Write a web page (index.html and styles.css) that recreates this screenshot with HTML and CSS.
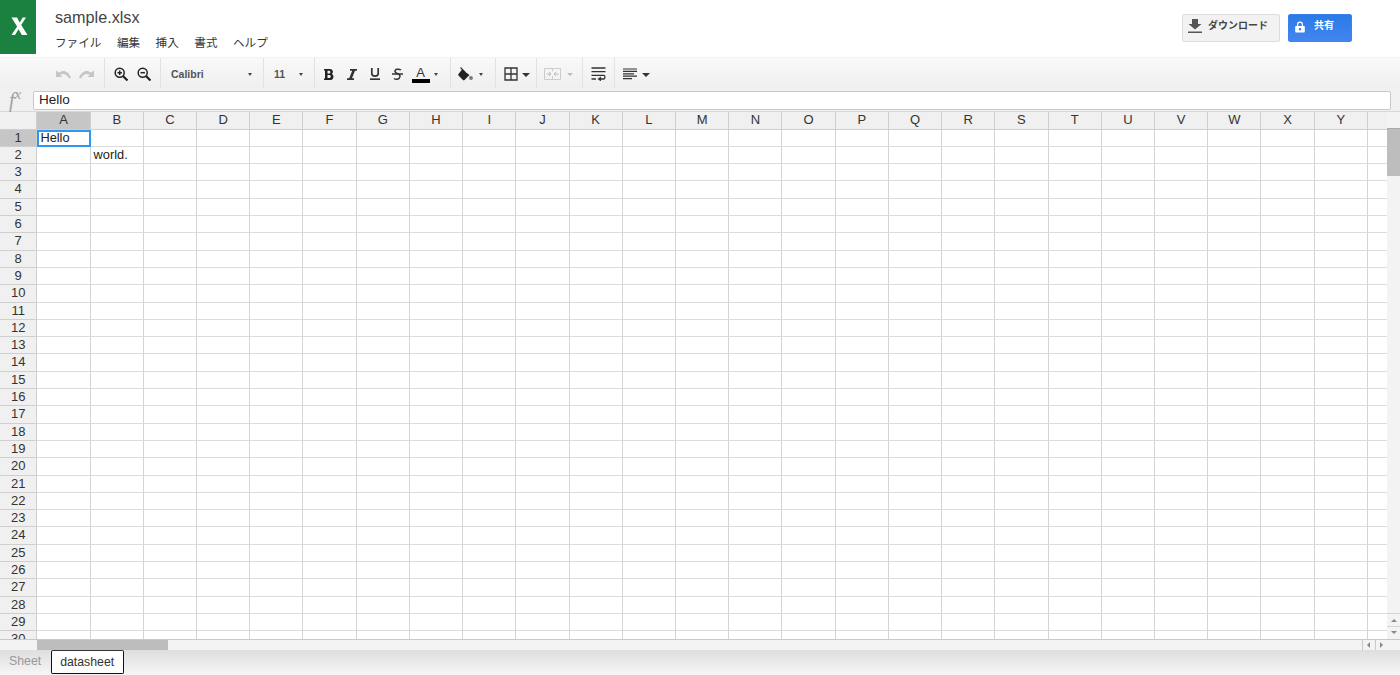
FILE: index.html
```html
<!DOCTYPE html>
<html lang="ja">
<head>
  <meta charset="UTF-8" />
  <title>sample.xlsx</title>
  <link rel="stylesheet" href="styles.css">
</head>
<body>

  <!-- HEADER -->
  <header class="app-header">
    <div class="logo">
      <svg width="36" height="54" viewBox="0 0 36 54" aria-hidden="true">
        <path fill="#fff" d="M11.500 17.500h5.500l2.700 5 3-5h3.300l-4.800 7.400 6.300 10.100h-5.600l-3.400-5.800-3.500 5.800h-3.500l5.600-8.600z"/>
      </svg>
    </div>
    <div class="doc-info">
      <div class="doc-title">sample.xlsx</div>
      <nav class="menu">
        <span>ファイル</span>
        <span>編集</span>
        <span>挿入</span>
        <span>書式</span>
        <span>ヘルプ</span>
      </nav>
    </div>
    <div class="actions">
      <button class="btn-download">
        <svg width="16" height="16" viewBox="0 0 16 16" aria-hidden="true">
          <path fill="#555" d="M5 1h6v5h3.500L8 11.500 1.500 6H5zM1 13.500h14V15H1z"/>
        </svg>
        <span>ダウンロード</span>
      </button>
      <button class="btn-share">
        <svg width="10" height="12" viewBox="0 0 10 12" aria-hidden="true">
          <path fill="#fff" d="M1 5h1V3.500a3 3 0 0 1 6 0V5h1a.8.8 0 0 1 .8.800v5a.8.8 0 0 1-.8.800H1a.8.8 0 0 1-.8-.8v-5A.8.8 0 0 1 1 5zm2.200 0h3.600V3.500a1.800 1.800 0 0 0-3.600 0zM5 7a1.200 1.200 0 1 0 0 2.400A1.200 1.200 0 0 0 5 7z"/>
        </svg>
        <span>共有</span>
      </button>
    </div>
  </header>

  <!-- TOOLBAR -->
  <div class="toolbar">
    <div class="group group-history">
      <span class="tool">
        <svg width="15" height="10" viewBox="0 0 15 10"><path fill="#c6c6c6" d="M0 1.500V8h6.500L4.300 5.800C7 4.200 10.500 4.500 13 9.500L15 8.500C12 1.500 7 .5 3 3.500z"/></svg>
      </span>
      <span class="tool">
        <svg width="15" height="10" viewBox="0 0 15 10"><path fill="#c6c6c6" d="M15 1.500V8H8.500l2.200-2.200C8 4.200 4.500 4.500 2 9.500L0 8.500C3 1.500 8 .5 12 3.500z"/></svg>
      </span>
    </div>
    <div class="group group-zoom">
      <span class="tool">
        <svg width="14" height="14" viewBox="0 0 14 14"><g fill="none" stroke="#222" stroke-width="1.500"><circle cx="5.700" cy="5.700" r="4.500"/><path d="M9 9l4.500 4.500" stroke-width="2.200"/><path d="M3.500 5.700h4.400M5.700 3.500v4.400"/></g></svg>
      </span>
      <span class="tool">
        <svg width="14" height="14" viewBox="0 0 14 14"><g fill="none" stroke="#222" stroke-width="1.500"><circle cx="5.700" cy="5.700" r="4.500"/><path d="M9 9l4.500 4.500" stroke-width="2.200"/><path d="M3.500 5.700h4.400"/></g></svg>
      </span>
    </div>
    <div class="group group-font">
      <span class="font-name">Calibri</span>
      <i class="caret"></i>
    </div>
    <div class="group group-size">
      <span class="font-size">11</span>
      <i class="caret"></i>
    </div>
    <div class="group group-format">
      <span class="tool">
        <svg width="10" height="11" viewBox="0 0 10 11"><path fill="#222" fill-rule="evenodd" d="M0 0h6c3 0 3.800 3.700 1.800 4.900C10.300 5.700 10 11 6.500 11H0V9.500h1v-8H0zm3.500 1.800v2.700h1.700c1.500 0 1.500-2.700 0-2.700zm0 4.300v3h2c1.700 0 1.700-3 0-3z"/></svg>
      </span>
      <span class="tool">
        <svg width="10" height="11" viewBox="0 0 10 11"><path fill="#333" d="M3 0h7v1.700H8L5 9.300h2V11H0V9.300h2.200l3-7.600H3z"/></svg>
      </span>
      <span class="tool">
        <svg width="10" height="12" viewBox="0 0 10 12"><g fill="none" stroke="#333" stroke-width="1.700"><path d="M1.800 0v5.500c0 3.500 6.400 3.500 6.400 0V0"/><path d="M0 11.200h10"/></g></svg>
      </span>
      <span class="tool">
        <svg width="11" height="13" viewBox="0 0 11 13"><g fill="none" stroke="#333" stroke-width="1.500"><path d="M9 2C7 .5 2.500 1 3 3.500S8.500 5.500 8 8.500 4 12 2 10.500"/><path d="M0 6h11"/></g></svg>
      </span>
      <span class="tool tool-color">
        <span class="color-a">A</span>
        <span class="color-bar"></span>
      </span>
      <i class="caret caret-tight"></i>
    </div>
    <div class="group group-fill">
      <span class="tool">
        <svg width="15" height="14" viewBox="0 0 15 14"><path fill="none" stroke="#333" stroke-width="1.200" d="M2.500.500l4.800 4.800"/><path fill="#222" d="M4 2.500l7.500 5.500-5 5c-.5.500-1 .5-1.500 0L.5 8.500c-.5-.5-.5-1 0-1.500z"/><circle cx="13" cy="11" r="1.900" fill="#777"/></svg>
      </span>
      <i class="caret"></i>
    </div>
    <div class="group group-borders">
      <span class="tool">
        <svg width="14" height="14" viewBox="0 0 14 14"><path fill="none" stroke="#333" stroke-width="1.300" d="M1 1h12v12H1zM7 1v12M1 7h12"/></svg>
      </span>
      <i class="caret caret-big"></i>
    </div>
    <div class="group group-merge">
      <span class="tool">
        <svg width="17" height="12" viewBox="0 0 17 12"><g fill="none" stroke="#ccc"><path d="M.5.500h16v11H.5zM8.500.500v3M8.500 8v3.500"/><path d="M2.500 6h4M5 4l2 2-2 2M14.500 6h-4M12 4l-2 2 2 2" stroke="#bbb"/></g></svg>
      </span>
      <i class="caret caret-off"></i>
    </div>
    <div class="group group-wrap">
      <span class="tool">
        <svg width="15" height="14" viewBox="0 0 15 14"><g fill="none" stroke="#333" stroke-width="1.300"><path d="M.5 1h14M.5 4.700h14M.5 8.400h12.300c1.500 0 1.500 3.600 0 3.600H9M.5 12H5"/></g><path fill="#333" d="M10 9.500v5l-3.500-2.500z"/></svg>
      </span>
    </div>
    <div class="group group-align">
      <span class="tool">
        <svg width="15" height="12" viewBox="0 0 15 12"><path fill="none" stroke="#333" stroke-width="1.200" d="M0 1h14M0 3.400h14M0 5.800h11M0 8.200h14M0 10.600h9"/></svg>
      </span>
      <i class="caret caret-big"></i>
    </div>
  </div>

  <!-- FORMULA BAR -->
  <div class="formula-bar">
    <span class="fx"><em>f</em><sup>x</sup></span>
    <div class="formula-input">Hello</div>
  </div>

  <!-- SHEET -->
  <div class="sheet-area">
    <div class="grid" id="grid"></div>
    <div class="vscroll">
      <div class="vscroll-track"><div class="vscroll-thumb"></div></div>
      <button class="arrow arrow-up"></button>
      <button class="arrow arrow-down"></button>
    </div>
  </div>

  <div class="hscroll">
    <div class="hscroll-track"><div class="hscroll-thumb"></div></div>
    <button class="arrow arrow-left"></button>
    <button class="arrow arrow-right"></button>
  </div>

  <!-- SHEET TABS -->
  <div class="tabs">
    <span class="tab">Sheet</span>
    <span class="tab tab-active">datasheet</span>
  </div>

  <script src="script.js"></script>
</body>
</html>
```

FILE: styles.css
```css
* {
  box-sizing: border-box;
}
html, body {
  height: 100%;
  margin: 0;
  overflow: hidden;
}
body {
  display: flex;
  flex-direction: column;
  font-family: "Liberation Sans", "Noto Sans CJK JP", sans-serif;
  color: #333;
  background: #fff;
}

/* header */
.app-header {
  display: flex;
  height: 57px;
  flex: none;
  background: #fff;
}
.logo {
  width: 36px;
  height: 54px;
  background: #1a8140;
}
.doc-info {
  padding: 7px 0 0 19px;
}
.doc-title {
  font-size: 16.200px;
  line-height: 20px;
  color: #444;
}
.menu {
  display: flex;
  gap: 15.500px;
  margin-top: 7px;
  font-size: 11.600px;
  line-height: 18px;
  color: #333;
}
.actions {
  display: flex;
  gap: 8px;
  margin-left: auto;
  margin-right: 48px;
  padding-top: 14px;
}
.actions button {
  display: flex;
  align-items: flex-start;
  height: 28px;
  padding: 0;
  border-radius: 2px;
  font: bold 10px "Liberation Sans", "Noto Sans CJK JP", sans-serif;
  line-height: 22px;
}
.btn-download {
  width: 98px;
  background: #f2f2f2;
  border: 1px solid #ddd;
  color: #444;
}
.btn-download svg {
  margin: 3px 0 0 4px;
}
.btn-download span {
  margin-left: 5px;
}
.btn-share {
  width: 64px;
  background: linear-gradient(#2a7ae8, #4485ef);
  border: 1px solid #3b82ee;
  color: #fff;
}
.btn-share svg {
  margin: 6px 0 0 6px;
}
.btn-share span {
  margin-left: 9px;
}

/* toolbar */
.toolbar {
  display: flex;
  height: 31px;
  flex: none;
  padding-left: 52px;
  background: linear-gradient(#f9f9f9, #efefef);
  border-top: 1px solid #f2f2f2;
}
.group {
  display: flex;
  align-items: center;
  height: 30px;
  padding-top: 2px;
  border-right: 1px solid #e2e2e2;
  padding-left: 3px;
}
.group-history { width: 53px; padding-left: 0; }
.group-zoom { width: 56px; padding-left: 4px; }
.group-font { width: 103px; padding-left: 10px; }
.group-size { width: 51px; padding-left: 10px; }
.group-format { width: 136px; padding-left: 2px; }
.group-fill { width: 45px; }
.group-borders { width: 41px; }
.group-merge { width: 46px; padding-left: 4px; }
.group-wrap { width: 32px; padding-left: 4px; }
.group-align { padding-left: 4px; border-right: none; }

.tool {
  display: flex;
  justify-content: center;
  align-items: center;
  flex: none;
  width: 23px;
  height: 20px;
}
.tool-color {
  flex-direction: column;
}
.color-a {
  font-size: 13px;
  line-height: 13px;
  color: #333;
}
.color-bar {
  width: 18px;
  height: 4px;
  background: #000;
}
.font-name {
  width: 75px;
  font-size: 10.500px;
  font-weight: bold;
  color: #555;
}
.font-size {
  width: 23px;
  font-size: 10.500px;
  font-weight: bold;
  color: #555;
}
.caret {
  flex: none;
  width: 8px;
  height: 3px;
  position: relative;
}
.caret::after {
  content: "";
  position: absolute;
  left: 2px;
  top: 0;
  border: 2px solid transparent;
  border-top: 3px solid #444;
  border-bottom: 0;
}
.caret-big::after {
  left: 0;
  border-width: 4px 4px 0;
  border-top-color: #333;
}
.caret-off::after {
  left: 1px;
  border-width: 3px 3px 0;
  border-top-color: #bbb;
}
.caret-off {
  margin-left: 2px;
}

/* formula bar */
.formula-bar {
  display: flex;
  align-items: center;
  height: 24px;
  flex: none;
  padding: 2px 9px 1px 0;
  background: #f0f0f0;
  border-bottom: 1px solid #d8d8d8;
}
.fx {
  width: 33px;
  padding-left: 9px;
  font-family: "Liberation Serif", serif;
  font-size: 20px;
  line-height: 18px;
  color: #a0a0a0;
}
.fx sup {
  font-size: 15px;
  line-height: 0;
  font-style: italic;
}
.formula-input {
  flex: 1;
  height: 19px;
  padding-left: 5px;
  background: #fff;
  border: 1px solid #c8c8c8;
  border-radius: 2px;
  font-size: 13.500px;
  line-height: 15px;
  color: #222;
}

/* grid */
.sheet-area {
  display: flex;
  flex: 1;
  min-height: 0;
}
.grid {
  flex: 1;
  display: grid;
  grid-template-columns: 37.400px repeat(25, 53.22px) 20px;
  grid-template-rows: 17.600px repeat(30, 17.31px);
  overflow: hidden;
  background: #fff;
}
.cell {
  border-right: 1px solid #d4d4d4;
  border-bottom: 1px solid #dcdcdc;
  padding-left: 3px;
  font-size: 12.800px;
  line-height: 15px;
  white-space: nowrap;
  color: #222;
}
.head {
  background: #f0f0f0;
  border-color: #cfcfcf;
  padding: 0;
  text-align: center;
  font-size: 13px;
  line-height: 15px;
  color: #333;
}
.selected-head {
  background: #c6c6c6;
}
.active {
  outline: 2px solid #2f97ee;
  outline-offset: -2px;
  border: none;
}

/* scrollbars */
.vscroll {
  display: flex;
  flex-direction: column;
  flex: none;
  width: 13px;
  background: #f3f3f3;
}
.vscroll-track {
  flex: 1;
  padding-top: 16px;
}
.vscroll-thumb {
  height: 48px;
  background: #bdbdbd;
  border-top: 1px solid #aaa;
}
.hscroll {
  display: flex;
  height: 11px;
  flex: none;
  padding-left: 37px;
  padding-right: 13px;
  background: #f3f3f3;
  border-top: 1px solid #c8c8c8;
}
.hscroll-track {
  flex: 1;
}
.hscroll-thumb {
  width: 131px;
  height: 100%;
  background: #bdbdbd;
}
.arrow {
  position: relative;
  flex: none;
  width: 13px;
  height: 13px;
  padding: 0;
  background: #f3f3f3;
  border: none;
  border-top: 1px solid #d4d4d4;
}
.arrow::after {
  content: "";
  position: absolute;
  left: 4px;
  top: 4px;
  border: 3px solid transparent;
}
.arrow-up::after {
  top: 2px;
  border-bottom-color: #888;
}
.arrow-down::after {
  top: 4px;
  border-top-color: #888;
}
.arrow-left, .arrow-right {
  height: 10px;
  border-top: none;
  border-left: 1px solid #c8c8c8;
}
.arrow-left {
  width: 13px;
}
.arrow-right {
  width: 12px;
}
.arrow-left::after {
  left: 1px;
  top: 2px;
  border-right-color: #888;
}
.arrow-right::after {
  left: 4px;
  top: 2px;
  border-left-color: #888;
}

/* tabs */
.tabs {
  display: flex;
  height: 25px;
  flex: none;
  background: linear-gradient(#dedede, #f6f6f6);
}
.tab {
  padding: 4px 9px 0;
  font-size: 12.300px;
  line-height: 14px;
  color: #999;
}
.tab-active {
  width: 73px;
  height: 24px;
  margin-left: 1px;
  padding-left: 8px;
  background: #fff;
  border: 1px solid #111;
  border-top: 1px solid #333;
  border-radius: 2px;
  color: #333;
}
```

FILE: script.js
```js
// Build the sheet cells
const grid = document.getElementById('grid');
const letters = 'ABCDEFGHIJKLMNOPQRSTUVWXY'.split('');

function addCell(text, className) {
  const cell = document.createElement('div');
  cell.className = 'cell ' + className;
  cell.textContent = text;
  grid.appendChild(cell);
}

addCell('', 'head');
letters.forEach((l, i) => addCell(l, i === 0 ? 'head selected-head' : 'head'));
addCell('', 'head');

for (let row = 1; row <= 30; row++) {
  addCell(row, row === 1 ? 'head selected-head' : 'head');
  letters.forEach((l) => {
    if (l === 'A' && row === 1) addCell('Hello', 'active');
    else if (l === 'B' && row === 2) addCell('world.', '');
    else addCell('', '');
  });
  addCell('', '');
}
```
